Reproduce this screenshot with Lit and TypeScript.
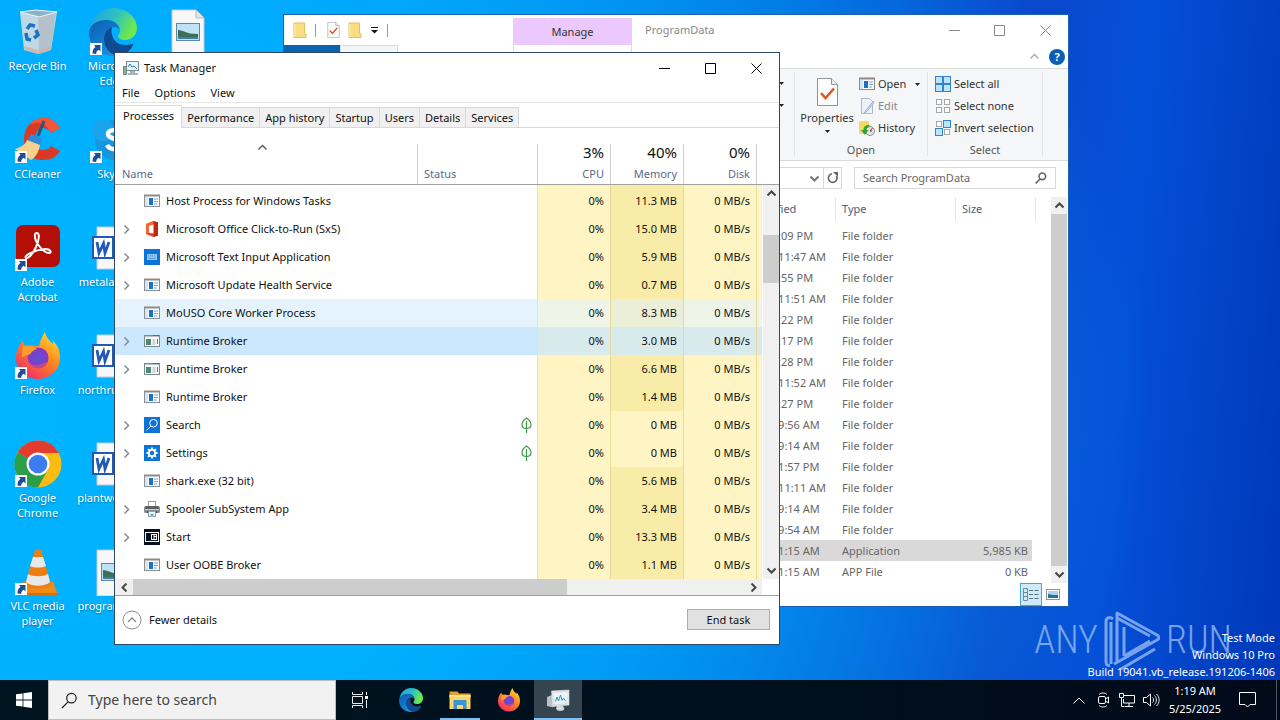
import { LitElement, html, css, svg, nothing } from "lit";
import { customElement } from "lit/decorators.js";
import { classMap } from "lit/directives/class-map.js";

const base = css`
  * { box-sizing: border-box; }
  button, input { font: inherit; color: inherit; margin: 0; padding: 0; border: 0; background: none; border-radius: 0; outline: none; }
  button { display: flex; align-items: center; white-space: nowrap; }
  svg { display: block; flex: none; }
  ul { list-style: none; margin: 0; padding: 0; }
`;

const icon = (w: number, h: number, body: unknown) =>
  html`<svg width=${w} height=${h} viewBox="0 0 ${w} ${h}" fill="none" aria-hidden="true">${body}</svg>`;

/* ---------- small 16px icons ---------- */
const genericApp = () => icon(16, 16, svg`
  <rect x=".5" y="2.5" width="15" height="11" fill="#fff" stroke="#8a8f96"/>
  <path d="M0 2.5h16" stroke="#8f8884" stroke-width="2"/><path d="M1 4v9h3V4z" fill="#d3e9f7"/>
  <rect x="5" y="5" width="4" height="7" fill="#1a72c4"/><path d="M10 6h4M10 8.5h4M10 11h3" stroke="#6fa4cf"/>`);
const brokerApp = () => icon(16, 16, svg`
  <rect x=".5" y="2.5" width="15" height="11" fill="#f7faf9" stroke="#7f8c8c"/>
  <path d="M1 3.5h14" stroke="#b5c4c4"/><path d="M10 2v1M12 2v1M14 2v1" stroke="#445"/>
  <rect x="2" y="6" width="5" height="6" fill="#4d8a7c"/><path d="M8.5 7h3M8.5 9h3M8.5 11h3" stroke="#a7b3b3"/><path d="M13.5 6v5" stroke="#6a7676"/>`);
const officeApp = () => icon(16, 16, svg`
  <path d="M9.500 0 2 3v10l7.500 3 4.500-1.500v-13z" fill="#e8431f"/><path d="M9.500 0v16l4.500-1.500v-13z" fill="#c4260f"/>
  <path d="M2 3v10l3-1.300V4.600l4.500-1.400V0z" fill="#ef6b2c"/><path d="M5 4.700 9.500 3.400v9.200L5 11.800z" fill="#fff"/>`);
const keyboardApp = () => icon(16, 16, svg`
  <rect width="16" height="16" fill="#0a74d8"/><rect x="3" y="5" width="10" height="6" fill="#8fc4f0"/>
  <path d="M4 6.5h8M4 8h8" stroke="#5aa5e6" stroke-dasharray="1 1"/><path d="M5 9.5h6" stroke="#5aa5e6"/>`);
const searchApp = () => icon(16, 16, svg`
  <rect width="16" height="16" fill="#0a74d8"/><circle cx="9.5" cy="6.2" r="3.8" stroke="#fff"/><path d="M7 9 2.500 13.500" stroke="#fff"/>`);
const gearPath = svg`<g stroke="#fff" stroke-width="2"><path d="M8 2.500v11M2.500 8h11M4.100 4.100l7.800 7.800M11.900 4.100l-7.800 7.800"/></g><circle cx="8" cy="8" r="4" fill="#fff"/><circle cx="8" cy="8" r="2.200" fill="#0a74d8"/>`;
const settingsApp = () => icon(16, 16, svg`<rect width="16" height="16" fill="#0a74d8"/>${gearPath}`);
const printerApp = () => icon(16, 16, svg`
  <rect x="4.500" y=".5" width="7" height="5" fill="#fff" stroke="#9a9a9a"/>
  <rect x="0" y="5" width="16" height="7" rx="1.500" fill="#8b8e92"/><path d="M2 5h12l1 3H1z" fill="#5c5f63"/>
  <rect x="1" y="8" width="14" height="1" fill="#c9cccf"/><path d="M3 10h10v2H3z" fill="#3e4144"/>
  <rect x="4.500" y="10.500" width="7" height="5" fill="#f4fbfc" stroke="#8fa3ad"/><path d="M6.500 13h3v1.500h-3z" fill="#2b9ca8"/>`);
const startApp = () => icon(16, 16, svg`
  <rect width="16" height="16" fill="#06101f"/><rect x="1.500" y="3.500" width="13" height="9" stroke="#fff"/>
  <rect x="7.500" y="5.500" width="5" height="5" stroke="#fff"/><path d="M10 5v5M10 7.500h3" stroke="#fff"/>`);
const leaf = () => icon(12, 16, svg`
  <path d="M6.500 1C3.500 3 2 5 2 7.500 2 10 4 11.500 6.500 11.500S11 10 11 7.500C11 5 9.500 3 6.500 1z" stroke="#3f9a4a" stroke-width="1.200"/><path d="M6.500 4v12" stroke="#3f9a4a" stroke-width="1.200"/>`);
const chevron = (dir: "up" | "down" | "left" | "right", color = "#444", width = 2) => {
  const d = { up: "M.5 6.500 4.500 2.500 8.500 6.500", down: "M.5 2.500 4.500 6.500 8.500 2.500", left: "M6.500 .5 2.500 4.500 6.500 8.500", right: "M2.500 .5 6.500 4.500 2.500 8.500" }[dir];
  return icon(9, 9, svg`<path d=${d} stroke=${color} stroke-width=${width}/>`);
};
const triangle = () => icon(5, 3, svg`<path d="M0 0h5L2.500 3z" fill="#222"/>`);
const taskManagerIcon = () => icon(16, 16, svg`
  <path d="M.5 6.500h3v8h-3z" fill="#8fae8f" stroke="#6f8c74"/><rect x="3.500" y="1.500" width="12" height="9" fill="#e6f6fb" stroke="#7f8b93"/>
  <path d="M5 7l2-3 2 3 2-1 3 3" stroke="#2a7fa8"/><path d="M7 11h5v2h3v2H5v-2h2z" fill="#a9b4ba"/>`);
const folder = () => icon(14, 18, svg`
  <path d="M1 2h10.500v10L13 13v3.500H1z" fill="#fbdc82" stroke="#e6bf57"/><path d="M2 3v13" stroke="#fff0bd"/>`);
const checkedSheet = (w: number, h: number) => html`<svg width=${w} height=${h} viewBox="0 0 21 28" fill="none" aria-hidden="true">
  <path d="M.5.5h14l6 6v21H.5z" fill="#fdfdfd" stroke="#8e9499"/><path d="M14.500.5v6h6" stroke="#8e9499" fill="#eee"/>
  <path d="M4 15l4.500 5L17 10.500" stroke="#dc5a28" stroke-width="2.600"/></svg>`;
const editIcon = () => icon(16, 16, svg`
  <path d="M2.500.5h8l3 3v12h-11z" fill="#eef3fa" stroke="#a9b9d2"/><path d="M14.500 3 7 12l-2 3 3-1.500 7-9z" fill="#cfdcf0" stroke="#9fb3d0"/>`);
const historyIcon = () => icon(16, 16, svg`
  <path d="M0 1h10v4h2v9H0z" fill="#f8d866"/><circle cx="11" cy="11" r="4.500" fill="#dfe3e0" stroke="#8b918e"/><path d="M11 11l2.500-3M11 11h2" stroke="#8a3030"/>
  <path d="M10 5c-4 0-5.500 2-5.500 5H2l4 5 3.500-5H7.500c0-2 1-2.500 2.500-3z" fill="#2fa536"/>`);
const tiles = (a: string[]) => icon(16, 16, a.map((f, i) => {
  const x = (i % 2) * 8 + (f === "big" ? 0.5 : 1.5), y = Math.floor(i / 2) * 8 + (f === "big" ? 0.5 : 1.5), s = f === "big" ? 7 : 5;
  return svg`<rect x=${x} y=${y} width=${s} height=${s} fill=${f === "big" ? "#bfe3fb" : "#fff"} stroke=${f === "big" ? "#2f86cf" : "#a6a6a6"}/>`;
}));
const magnifier = (size: number, color: string, sw = 1) => html`<svg width=${size} height=${size} viewBox="0 0 18 18" fill="none" aria-hidden="true">
  <circle cx="11" cy="6.500" r="5" stroke=${color} stroke-width=${sw}/><path d="M7.500 10.500 1 17" stroke=${color} stroke-width=${sw}/></svg>`;

/* ---------- brand artwork, drawn on a 48 unit square ---------- */
const art = (size: number, body: unknown) => html`<svg width=${size} height=${size} viewBox="0 0 48 48" fill="none" aria-hidden="true">${body}</svg>`;
const arrowBadge = svg`<g><rect x="1" y="35" width="12" height="12" fill="#fff"/><path d="M3.500 45.500c0-4 1-5.500 3-6.500L5 37h6.500v6.500L9.800 41.800C8 42.500 7.500 44 7 46z" fill="#1d4f98"/></g>`;
const edgeArt = svg`
  <defs><linearGradient id="eg" x1="0" y1="0" x2="1" y2=".4"><stop stop-color="#1f9fe0"/><stop offset=".55" stop-color="#2cc0c4"/><stop offset="1" stop-color="#6ee84e"/></linearGradient>
  <linearGradient id="eb" x1="0" y1="0" x2=".6" y2="1"><stop stop-color="#0a5cb0"/><stop offset="1" stop-color="#1a8fe0"/></linearGradient></defs>
  <path d="M1 21C3 9 12 0 24 0c14 0 24 10 24 20 0 8-6 12-12 12-5 0-7-2-7-4 0-1 2-2 2-6 0-6-6-10-13-10-9 0-15 5-17 9z" fill="url(#eg)"/>
  <path d="M0 25c0-8 8-13 17-13 8 0 13 5 14 10-1-2-3-3-6-3-6 0-10 5-10 12 0 9 7 15 16 17-2 .3-5 0-7 0C10 48 0 37 0 25z" fill="url(#eb)"/>
  <path d="M15 31c0-6 3-10 8-12-2 7 2 18 13 18 5 0 7-2 8-1 1 1-5 11-14 12-9-1-15-8-15-17z" fill="#104a90"/>`;
const firefoxArt = svg`
  <defs><linearGradient id="ff" x1=".9" y1="0" x2=".2" y2="1"><stop stop-color="#ffe23a"/><stop offset=".45" stop-color="#ff8a1e"/><stop offset="1" stop-color="#f0256c"/></linearGradient>
  <radialGradient id="fp"><stop stop-color="#5b52d8"/><stop offset="1" stop-color="#8a35c4"/></radialGradient></defs>
  <path d="M2 26C2 18 5 13 9 9c0 2 1 4 3 5 3-1 6-1 8 0l5 0c1-6 4-11 6-14 1 5 4 8 8 12 0-2 0-3-1-4 6 5 8 11 8 18 0 12-10 21-22 21S2 38 2 26z" fill="url(#ff)"/>
  <circle cx="24" cy="26" r="10.500" fill="url(#fp)"/><path d="M9 14c6-1 11 0 14 3-3 1-5 2-6 4-2 3-6 1-9 5 0-4 0-8 1-12z" fill="#ff9d2a"/><path d="M14 28c2 4 6 6 11 5 4-1 5-3 8-3-2 5-6 8-11 8s-9-4-8-10z" fill="#ff5a3c" opacity=".5"/>`;
const chromeArt = svg`
  <circle cx="24" cy="24" r="23.500" fill="#f9bd12"/>
  <path d="M24 24 3.700 12.200A23.500 23.500 0 0 0 24 47.500L34 29.500z" fill="#2c9e49"/><path d="M24 24 3.700 12.200A23.500 23.500 0 0 1 44.500 12.500L44.800 13H24z" fill="#e33b2e"/>
  <circle cx="24" cy="24" r="11.500" fill="#fff"/><circle cx="24" cy="24" r="9.300" fill="#3b7df0"/>`;
const recycleArt = svg`
  <path d="M6 4 43 4l-6 38-13 4-14-4z" fill="#d3dde2" fill-opacity=".9"/><path d="M24 8l18-4-5 38-12 4z" fill="#b4bfc6" fill-opacity=".9"/><path d="M6 4l16-2 21 2-18 5z" fill="#8fb0c6" stroke="#edf4f8"/>
  <path d="M10 38l14 4 13-4-1 4-12 4-13-4z" fill="#cdb3a2" fill-opacity=".8"/>
  <g stroke="#1c73c0" stroke-width="3.500"><path d="M13 21l3-4 5 1"/><path d="M22 22l2 5-4 3"/><path d="M17 32l-4-1-1-6"/></g>`;
const ccleanerArt = svg`
  <path d="M46 12C42 5 35 1 28 2 17 3 10 12 10 23c0 13 9 22 20 21 8 0 13-4 16-9l-9-5c-2 3-5 4-8 4-5 0-8-5-8-11s3-11 8-11c4 0 6 2 8 5z" fill="#d93a26"/><path d="M46 12C42 5 35 1 28 2c-6 1-10 3-13 7 8-4 16-3 22 8z" fill="#f0563c"/>
  <path d="M30 5 24 20" stroke="#2f5570" stroke-width="3"/><path d="M17 18l11 4-2 8-13-5z" fill="#2f8bd8"/><path d="M13 24l13 5c-1 6-4 12-9 15L1 33c6-2 10-4 12-9z" fill="#f6d08c"/>`;
const acrobatArt = svg`
  <rect x="2" y="1" width="44" height="42" rx="7" fill="#b30f06"/><path d="M23 9c3 0 2 8-1 14-3 7-8 12-10 11-3-2 8-8 19-9 6 0 7 4 4 4-6 0-15-12-14-18 0-1 1-2 2-2z" stroke="#fff" stroke-width="2"/>`;
const vlcArt = svg`
  <path d="M9 34h30l5 13H3z" fill="#f28a18"/><path d="M3 45h41v2H3z" fill="#d86e0c"/><path d="M24 1c2 0 3 1 3.500 2.500L37 37c-4 5-22 5-26 0l9.500-33.500C21 2 22 1 24 1z" fill="#f07d12"/>
  <path d="M19 9h10l3 9c-4 2-12 2-16 0zM14 26c5 3 15 3 20 0l2 8c-5 5-19 5-24 0z" fill="#e8e8e8"/>`;
const skypeArt = svg`<circle cx="26" cy="24" r="20" fill="#1597e0"/><circle cx="14" cy="14" r="11" fill="#1ba4ec"/><path d="M33 17c-3-4-14-4-14 1 0 6 14 4 14 11 0 5-12 6-15 0" stroke="#fff" stroke-width="4.500"/>`;
const wordArt = svg`
  <path d="M8 3h25l7 7v35H8z" fill="#f7f7f7" stroke="#c9c9c9"/><rect x="4" y="13" width="20" height="21" fill="#fff" stroke="#2259b8" stroke-width="2"/>
  <path d="M8 18l2 11 4.500-9.500L16 29l4-11" stroke="#2259b8" stroke-width="2.800"/>`;
const pictureArt = svg`
  <path d="M8 2h24l8 8v38H8z" fill="#f7f7f7" stroke="#c9c9c9"/><path d="M32 2v8h8" stroke="#bbb" fill="#e4e4e4"/>
  <rect x="12.500" y="15.500" width="23" height="17" fill="#bfe2f7" stroke="#5d87a8"/><path d="M14 22c5 0 8 4 20 4v5H14z" fill="#3c6e58"/><path d="M14 29h20v2H14z" fill="#3f7fae"/>`;
const explorerArt = svg`
  <path d="M3 7h16l3 4h23v8H3z" fill="#e0a02a"/><path d="M3 14h42v28H3z" fill="#fbd565"/><path d="M11 42V26c0-1 1-2 2-2h22c1 0 2 1 2 2v16h-7v-8H18v8z" fill="#3795d6"/><path d="M3 14h42v4H3z" fill="#fde08b"/>`;
const monitorArt = svg`
  <path d="M2 18l12-5v26l-12-3z" fill="#b9c0c4"/><path d="M11 6l35-2v30l-32 3z" fill="#d9dfe2" stroke="#f4f6f7"/><path d="M15 10l28-2v22l-26 2z" fill="#eef5f9"/>
  <path d="M19 27l3-9 3 8 4-12 3 11 3-5 4 6" stroke="#3a8cc4" stroke-width="2"/><path d="M22 36h12l3 6c-3 5-14 5-17 0z" fill="#d3d8da"/>`;

@customElement("desktop-icons")
class DesktopIcons extends LitElement {
  static styles = [base, css`
    :host { display: block; padding-top: 8px; }
    .grid { display: grid; grid-template-rows: repeat(6, 108px); grid-auto-columns: 75px; grid-auto-flow: column; }
    .item { display: flex; justify-content: center; min-width: 0; }
    .shortcut { flex-direction: column; justify-content: flex-start; gap: 2px; color: #fff; font-size: 11px; line-height: 15px; text-align: center; white-space: normal; width: 75px; text-shadow: 0 1px 2px #0006; }
    .label { max-width: 73px; }
  `];
  private items: [unknown, string, boolean][] = [
    [recycleArt, "Recycle Bin", false], [ccleanerArt, "CCleaner", true], [acrobatArt, "Adobe Acrobat", true],
    [firefoxArt, "Firefox", true], [chromeArt, "Google Chrome", true], [vlcArt, "VLC media player", true],
    [edgeArt, "Microsoft Edge", true], [skypeArt, "Skype", true], [wordArt, "metalarea.rtf", false],
    [wordArt, "northrules.rtf", false], [wordArt, "plantwood.rtf", false], [pictureArt, "programs.jpg", false],
    [pictureArt, "", false],
  ];
  render() {
    return html`<ul class="grid">${this.items.map(([a, label, linked]) => html`
      <li class="item"><button class="shortcut" aria-label=${label || "Picture"}>${art(48, svg`${a}${linked ? arrowBadge : nothing}`)}<span class="label">${label}</span></button></li>`)}</ul>`;
  }
}

@customElement("explorer-window")
class ExplorerWindow extends LitElement {
  static styles = [base, css`
    :host { display: block; background: #fff; color: #333; font-size: 11px; line-height: 16px; outline: 1px solid #1b5fae; }
    .title { display: flex; height: 30px; align-items: center; }
    .quick { display: flex; align-items: center; gap: 8px; width: 229px; padding-left: 9px; }
    .bar { width: 1px; height: 13px; background: #999; }
    .bar:nth-child(2) { margin-right: 3px; }
    .manage { align-self: flex-end; height: 27px; width: 119px; display: flex; align-items: center; justify-content: center; background: #ebc9fc; }
    .name { flex: 1; padding-left: 13px; color: #888; }
    .caption { width: 45px; height: 30px; justify-content: center; }
    .caption:last-child { width: 46px; }
    .tabs { display: flex; height: 24px; border-bottom: 1px solid #dadbdc; align-items: center; }
    .file { width: 56px; height: 23px; background: #0a63b1; }
    .home { width: 58px; height: 23px; background: #f5f6f7; border: 1px solid #dadbdc; border-bottom: 0; }
    .context { width: 119px; height: 23px; border: 1px solid #dadbdc; border-width: 0 1px; margin-left: 115px; }
    .push { flex: 1; }
    .help { width: 16px; height: 16px; border-radius: 50%; background: #0a5fb4; color: #fff; font-weight: 700; justify-content: center; margin: 0 3px 0 10px; }
    .ribbon { display: flex; height: 92px; background: #f5f6f7; border-bottom: 1px solid #dadbdc; padding: 3px 0 4px; }
    .group { display: flex; flex-direction: column; justify-content: space-between; border-right: 1px solid #e2e3e4; }
    .clipboard { width: 511px; align-items: flex-end; justify-content: flex-start; gap: 19px; padding: 10px 10px 0; }
    .open { width: 133px; }
    .select { width: 115px; }
    .tools { display: flex; padding-left: 5px; gap: 5px; }
    .select .tools { padding-left: 7px; }
    .list { display: flex; flex-direction: column; gap: 6px; padding-top: 4px; }
    .list button { gap: 3px; }
    .properties { flex-direction: column; gap: 4px; padding-top: 6px; width: 54px; }
    .muted { color: #888; }
    .caption-label { text-align: center; color: #555; line-height: 12px; }
    .nav { display: flex; padding: 6px 12px 0 0; gap: 12px; }
    .address { display: flex; flex: 1; height: 22px; border: 1px solid #d9d9d9; justify-content: flex-end; }
    .address button { width: 18px; justify-content: center; }
    .address .refresh { border-left: 1px solid #d9d9d9; }
    .search { display: flex; align-items: center; width: 202px; height: 22px; border: 1px solid #d9d9d9; padding: 0 8px; }
    .search input { flex: 1; min-width: 0; }
    .search input::placeholder { color: #666; opacity: 1; }
    .content { display: flex; height: 386px; margin-top: 8px; }
    .files { flex: 1; padding-left: 200px; }
    table { border-collapse: separate; border-spacing: 0; table-layout: fixed; width: 552px; }
    th { height: 24px; font-weight: 400; text-align: left; color: #4c607a; border-right: 1px solid #e5e5e5; padding: 0 6px; }
    td { height: 21px; padding: 0 6px; color: #666; white-space: nowrap; overflow: hidden; }
    thead::after { content: ""; display: block; height: 4px; }
    .c-name { width: 233px; } .c-date { width: 119px; } .c-type { width: 120px; } .c-size { width: 76px; } .c-gap { width: 4px; }
    .right { text-align: right; padding: 0 4px; }
    .gap { padding: 0; }
    .picked td:not(.gap) { background: #d9d9d9; }
    .scroll { width: 16px; margin-right: 1px; background: #cdcdcd; display: flex; flex-direction: column; justify-content: space-between; }
    .scroll button { height: 17px; background: #f0f0f0; justify-content: center; }
    .status { display: flex; height: 23px; justify-content: flex-end; padding-right: 4px; }
    .status button { width: 22px; height: 23px; justify-content: center; }
    .status .on { background: #cdeaf9; border: 1px solid #4aa3d0; }
  `];
  private rows = [
    ["5/9/2021 1:09 PM"], ["1/11/2024 11:47 AM"], ["5/4/2021 3:55 PM"], ["1/11/2024 11:51 AM"],
    ["8/5/2022 2:22 PM"], ["5/3/2021 1:17 PM"], ["9/5/2023 2:28 PM"], ["1/11/2024 11:52 AM"],
    ["5/4/2021 3:27 PM"], ["11/7/2019 9:56 AM"], ["12/7/2019 9:14 AM"], ["12/9/2021 1:57 PM"],
    ["4/11/2025 11:11 AM"], ["12/7/2019 9:14 AM"], ["12/7/2019 9:54 AM"],
    ["5/25/2025 1:15 AM", "Application", "5,985 KB"], ["5/25/2025 1:15 AM", "APP File", "0 KB"],
  ];
  render() {
    return html`
      <div class="title">
        <div class="quick">${folder()}<span class="bar"></span>${checkedSheet(13, 16)}${folder()}${icon(9, 8, svg`<path d="M1 1.500h7" stroke="#111"/><path d="M1 4h7L4.500 7.500z" fill="#111"/>`)}<span class="bar"></span></div>
        <div class="manage">Manage</div>
        <div class="name">ProgramData</div>
        <button class="caption" aria-label="Minimize">${icon(11, 11, svg`<path d="M0 5.500h11" stroke="#888"/>`)}</button>
        <button class="caption" aria-label="Maximize">${icon(11, 11, svg`<path d="M.5.5h10v10H.5z" stroke="#888"/>`)}</button>
        <button class="caption" aria-label="Close">${icon(11, 11, svg`<path d="M.5.5l10 10M10.500.5l-10 10" stroke="#888"/>`)}</button>
      </div>
      <div class="tabs"><div class="file"></div><div class="home"></div><div class="context"></div><div class="push"></div>
        ${chevron("up", "#aaa", 1.5)}<button class="help">?</button></div>
      <div class="ribbon">
        <div class="group clipboard">${triangle()}${triangle()}</div>
        <div class="group open">
          <div class="tools">
            <button class="properties">${checkedSheet(21, 28)}<span>Properties</span>${triangle()}</button>
            <div class="list">
              <button>${genericApp()}<span>Open</span>&nbsp;${triangle()}</button>
              <button class="muted">${editIcon()}<span>Edit</span></button>
              <button>${historyIcon()}<span>History</span></button>
            </div>
          </div>
          <div class="caption-label">Open</div>
        </div>
        <div class="group select">
          <div class="tools"><div class="list">
            <button>${tiles(["big", "big", "big", "big"])}<span>Select all</span></button>
            <button>${tiles(["", "", "", ""])}<span>Select none</span></button>
            <button>${tiles(["", "big", "big", ""])}<span>Invert selection</span></button>
          </div></div>
          <div class="caption-label">Select</div>
        </div>
      </div>
      <div class="nav">
        <div class="address"><button aria-label="History">${chevron("down", "#777")}</button>
          <button class="refresh" aria-label="Refresh">${icon(12, 12, svg`<path d="M9.500 4A4.300 4.300 0 1 1 5 1.800" stroke="#666" stroke-width="1.600"/><path d="M6 0h5v5z" fill="#666"/>`)}</button></div>
        <label class="search"><input type="text" placeholder="Search ProgramData" aria-label="Search ProgramData">${magnifier(12, "#666", 2.4)}</label>
      </div>
      <div class="content">
        <div class="files"><table>
          <colgroup><col class="c-name"><col class="c-date"><col class="c-type"><col class="c-size"><col class="c-gap"></colgroup>
          <thead><tr><th aria-label="Name"></th><th>Date modified</th><th>Type</th><th colspan="2">Size</th></tr></thead>
          <tbody>${this.rows.map(([d, t, s]) => html`
            <tr class=${classMap({ picked: t === "Application" })}><td></td><td>${d}</td><td>${t ?? "File folder"}</td><td class="right">${s ?? ""}</td><td class="gap"></td></tr>`)}</tbody>
        </table></div>
        <div class="scroll"><button aria-label="Up">${chevron("up")}</button><button aria-label="Down">${chevron("down")}</button></div>
      </div>
      <div class="status">
        <button class="on" aria-label="Details">${icon(16, 13, svg`<path d="M.5.5h4v12h-4zM.5 4.500h4M.5 8.500h4" stroke="#6f8ba0"/><path d="M6 2.500h4M11.500 2.500h4M6 6.500h4M11.500 6.500h4M6 10.500h4M11.500 10.500h4" stroke="#5f6f7c"/>`)}</button>
        <button aria-label="Thumbnails">${icon(14, 11, svg`<rect x=".5" y=".5" width="13" height="10" fill="#fff" stroke="#8a97a3"/><rect x="2" y="2" width="10" height="7" fill="#a9d5f0"/><path d="M2 5l5 1 5 0v3H2z" fill="#2d6f8f"/>`)}</button>
      </div>`;
  }
}

type Proc = { name: string; icon: () => unknown; group?: boolean; mem: string; leaf?: boolean; state?: string };

@customElement("task-manager")
class TaskManager extends LitElement {
  static styles = [base, css`
    :host { display: block; background: #fff; color: #111; font-size: 11px; line-height: 16px; border: 1px solid #2c4a66; }
    .title { display: flex; height: 30px; align-items: center; padding-left: 8px; gap: 5px; }
    .name { flex: 1; }
    .caption { width: 46px; height: 30px; justify-content: center; }
    .controls { display: flex; }
    .menu { display: flex; height: 20px; padding-left: 7px; gap: 15px; border-bottom: 1px solid #e6e6e6; }
    .tabs { display: flex; align-items: flex-end; height: 25px; }
    .tabs::after { content: ""; flex: 1; border-bottom: 1px solid #d9d9d9; }
    .tab { height: 21px; padding: 0 5px; background: #f0f0f0; border: 1px solid #d9d9d9; border-left: 0; }
    .tab.active { height: 23px; padding: 0 7px 1px 8px; background: #fff; border-bottom-color: #fff; }
    .view { display: flex; }
    table { flex: 1; min-width: 0; border-collapse: separate; border-spacing: 0; table-layout: fixed; margin-right: 1px; }
    .c-status { width: 120px; } .c-num { width: 73px; } .c-end { width: 5px; }
    th { position: relative; height: 57px; padding: 12px 6px 2px; border-bottom: 1px solid #a0a0a0; font-weight: 400; color: #5b6b88; vertical-align: bottom; text-align: left; }
    th::after { content: ""; position: absolute; right: 0; top: 16px; bottom: 0; width: 1px; background: #d0d0d0; }
    th:last-child::after { content: none; }
    .num { text-align: right; }
    .load { display: block; margin-bottom: 3px; font-size: 15px; line-height: 22px; color: #111; }
    .sort { position: absolute; left: 0; right: 8px; top: 15px; display: flex; justify-content: center; }
    td { height: 28px; padding: 0 6px; white-space: nowrap; }
    th:first-child, td:first-child { padding-left: 7px; }
    tbody tr:first-child td { height: 30px; padding-top: 2px; }
    .proc { display: flex; align-items: center; height: 28px; gap: 6px; }
    .twist { width: 10px; margin-right: 6px; }
    .leaf { display: flex; justify-content: flex-end; }
    td.num, td.end { background: #fff4c4; }
    td.num { border-right: 1px solid #e6d99a; }
    th.num { padding-right: 7px; }
    .view .end { padding: 0; }
    td.num.warm { background: #f9eca8; }
    .view .status-cell { border-right: 1px solid #efe3ab; padding-right: 5px; }
    .hover td { background: #e5f3ff; } .hover td.num, .hover td.end { background: #eff4e8; } .hover td.num.warm { background: #ebefd8; }
    .selected td { background: #cce8ff; } .selected td.num, .selected td.end, .selected td.num.warm { background: #d9eaec; }
    .side { display: flex; flex-direction: column; width: 16px; }
    .cap { height: 57px; border-bottom: 1px solid #a0a0a0; margin-left: -1px; }
    .vscroll { flex: 1; display: grid; grid-template-rows: 17px 33px 48px 1fr 17px; background: #f0f0f0; }
    .vscroll button, .hscroll button { justify-content: center; background: #f0f0f0; }
    .thumb { background: #cdcdcd; }
    .vscroll .thumb { grid-row: 3; }
    .vscroll .down { grid-row: 5; }
    .hscroll { display: grid; grid-template-columns: 18px 71fr 29fr 18px; height: 16px; margin-right: 17px; background: #f0f0f0; }
    .hscroll .right { grid-column: 4; }
    .footer { display: flex; justify-content: space-between; align-items: center; height: 49px; border-top: 1px solid #a0a0a0; padding: 0 9px 1px 7px; }
    .fewer { gap: 7px; }
    .end-task { width: 83px; height: 21px; justify-content: center; background: #e1e1e1; border: 1px solid #adadad; }
  `];
  private procs: Proc[] = [
    { name: "Host Process for Windows Tasks", icon: genericApp, mem: "11.3 MB" },
    { name: "Microsoft Office Click-to-Run (SxS)", icon: officeApp, group: true, mem: "15.0 MB" },
    { name: "Microsoft Text Input Application", icon: keyboardApp, group: true, mem: "5.9 MB" },
    { name: "Microsoft Update Health Service", icon: genericApp, group: true, mem: "0.7 MB" },
    { name: "MoUSO Core Worker Process", icon: genericApp, mem: "8.3 MB", state: "hover" },
    { name: "Runtime Broker", icon: brokerApp, group: true, mem: "3.0 MB", state: "selected" },
    { name: "Runtime Broker", icon: brokerApp, group: true, mem: "6.6 MB" },
    { name: "Runtime Broker", icon: genericApp, mem: "1.4 MB" },
    { name: "Search", icon: searchApp, group: true, mem: "0 MB", leaf: true },
    { name: "Settings", icon: settingsApp, group: true, mem: "0 MB", leaf: true },
    { name: "shark.exe (32 bit)", icon: genericApp, mem: "5.6 MB" },
    { name: "Spooler SubSystem App", icon: printerApp, group: true, mem: "3.4 MB" },
    { name: "Start", icon: startApp, group: true, mem: "13.3 MB" },
    { name: "User OOBE Broker", icon: genericApp, mem: "1.1 MB" },
  ];
  render() {
    const tabs = ["Processes", "Performance", "App history", "Startup", "Users", "Details", "Services"];
    return html`
      <div class="title">${taskManagerIcon()}<span class="name">Task Manager</span>
        <div class="controls">
          <button class="caption" aria-label="Minimize">${icon(11, 11, svg`<path d="M0 5.500h11" stroke="#000"/>`)}</button>
          <button class="caption" aria-label="Maximize">${icon(11, 11, svg`<path d="M.5.5h10v10H.5z" stroke="#000"/>`)}</button>
          <button class="caption" aria-label="Close">${icon(11, 11, svg`<path d="M.5.5l10 10M10.500.5l-10 10" stroke="#000"/>`)}</button>
        </div></div>
      <div class="menu"><button>File</button><button>Options</button><button>View</button></div>
      <div class="tabs" role="tablist">${tabs.map((t, i) => html`<button role="tab" class=${classMap({ tab: true, active: i === 0 })}>${t}</button>`)}</div>
      <div class="view">
        <table>
          <colgroup><col><col class="c-status"><col class="c-num"><col class="c-num"><col class="c-num"><col class="c-end"></colgroup>
          <thead><tr>
            <th><span class="sort">${chevron("up", "#555", 1.3)}</span>Name</th><th>Status</th>
            <th class="num"><span class="load">3%</span>CPU</th><th class="num"><span class="load">40%</span>Memory</th>
            <th class="num"><span class="load">0%</span>Disk</th><th class="end"></th></tr></thead>
          <tbody>${this.procs.map((p) => html`
            <tr class=${p.state ?? ""}>
              <td><div class="proc"><span class="twist">${p.group ? chevron("right", "#8a8a8a", 1.5) : nothing}</span>${p.icon()}<span>${p.name}</span></div></td>
              <td class="status-cell">${p.leaf ? html`<div class="leaf">${leaf()}</div>` : nothing}</td>
              <td class="num">0%</td><td class=${classMap({ num: true, warm: p.mem !== "0 MB" })}>${p.mem}</td><td class="num">0 MB/s</td><td class="end"></td>
            </tr>`)}</tbody>
        </table>
        <div class="side"><div class="cap"></div>
          <div class="vscroll"><button aria-label="Up">${chevron("up")}</button><div class="thumb"></div><button class="down" aria-label="Down">${chevron("down")}</button></div></div>
      </div>
      <div class="hscroll"><button aria-label="Left">${chevron("left")}</button><div class="thumb"></div><button class="right" aria-label="Right">${chevron("right")}</button></div>
      <div class="footer">
        <button class="fewer">${icon(20, 20, svg`<circle cx="10" cy="10" r="9" stroke="#8a8a8a"/><path d="M6 12l4-4 4 4" stroke="#8a8a8a" stroke-width="1.300"/>`)}Fewer details</button>
        <button class="end-task">End task</button>
      </div>`;
  }
}

@customElement("task-bar")
class TaskBar extends LitElement {
  static styles = [base, css`
    :host { display: flex; height: 40px; background: linear-gradient(90deg, #00141f, #00101d 60%, #020a1a); color: #fff; font-size: 11px; line-height: 18px; }
    .start { width: 48px; justify-content: center; }
    .search { display: flex; align-items: center; width: 288px; gap: 10px; padding-left: 12px; background: #f2f2f2; border: 1px solid #bdbdbd; color: #444; font-size: 14px; }
    .search input { flex: 1; min-width: 0; }
    .search input::placeholder { color: #444; opacity: 1; }
    .apps { display: flex; flex: 1; gap: 1px; }
    .app { width: 48px; justify-content: center; }
    .view { margin-right: 2px; }
    .running { background: linear-gradient(#7cc0f5, #7cc0f5) center bottom / 40px 2px no-repeat; }
    .active { background: linear-gradient(#7cc0f5, #7cc0f5) center bottom / 48px 2px no-repeat #34454f; }
    .tray { display: flex; align-items: center; }
    .tray button { width: 24px; height: 40px; justify-content: center; }
    .tray .clock { width: 64px; flex-direction: column; }
    .tray .notes { width: 41px; }
    .peek { width: 4px; margin-left: 8px; height: 40px; border-left: 1px solid #4d5a66; }
  `];
  render() {
    return html`
      <button class="start" aria-label="Start">${icon(16, 16, svg`<path d="M0 2.300 6.600 1.400v6.200H0zM7.400 1.300 16 0v7.600H7.400zM0 8.400h6.600v6.200L0 13.700zM7.400 8.400H16V16l-8.600-1.300z" fill="#fff"/>`)}</button>
      <label class="search">${magnifier(17, "#222", 1.3)}<input type="text" placeholder="Type here to search" aria-label="Search"></label>
      <div class="apps">
        <button class="app view" aria-label="Task View">${icon(17, 16, svg`<path d="M.5 0v2.500h10V0M.5 4.500h10v7H.5zM.5 16v-2.500h10V16M14.500 0v3M14.500 8v8" stroke="#e6eaec"/><path d="M13 4h3v3h-3z" fill="#fff"/>`)}</button>
        <button class="app" aria-label="Edge">${art(24, edgeArt)}</button>
        <button class="app running" aria-label="File Explorer">${art(24, explorerArt)}</button>
        <button class="app" aria-label="Firefox">${art(24, firefoxArt)}</button>
        <button class="app active" aria-label="Task Manager">${art(24, monitorArt)}</button>
      </div>
      <div class="tray">
        <button aria-label="More">${icon(12, 7, svg`<path d="M.5 6.500 6 1l5.500 5.500" stroke="#fff"/>`)}</button>
        <button aria-label="Meet now">${icon(12, 16, svg`<rect x="1.500" y="4.500" width="7" height="7" rx="1.500" stroke="#fff"/><path d="M8.500 7l3-2v6l-3-2" stroke="#fff"/><path d="M2 2.500c2-2 6-2 8 0M2 13.500c2 2 6 2 8 0" stroke="#ddd"/>`)}</button>
        <button aria-label="Network">${icon(16, 14, svg`<path d="M5 2.500h10.500v7.500H4.500V6M10 10v3M6 13.500h8M.5.5h4v4h-4zM2.500 4.500v9h3" stroke="#fff"/>`)}</button>
        <button aria-label="Volume">${icon(17, 14, svg`<path d="M.5 4.500h3l4-3.500v12l-4-3.500h-3z" stroke="#fff"/><path d="M9.500 4.500c1.500 1.500 1.500 3.500 0 5M11.500 2.500c2.500 2.500 2.500 6.500 0 9M13.500 1c3.500 3.500 3.500 8.500 0 12" stroke="#e6e6e6"/>`)}</button>
        <button class="clock"><span>1:19 AM</span><span>5/25/2025</span></button>
        <button class="notes" aria-label="Notifications">${icon(17, 16, svg`<path d="M.5.500h16v12h-5.500l-2.500 2.500-2.500-2.500H.5z" stroke="#fff"/>`)}</button>
        <div class="peek"></div>
      </div>`;
  }
}

@customElement("app-root")
class AppRoot extends LitElement {
  static styles = [base, css`
    :host { display: flex; flex-direction: column; height: 100vh; overflow: hidden; font-family: "Noto Sans", "Open Sans", sans-serif; font-size: 11px; }
    .desktop { position: relative; flex: 1; min-height: 0;
      background: radial-gradient(ellipse 90% 130% at 0% 60%, #00b4ff 0%, #00b0ff 40%, #0098f400 100%),
        linear-gradient(95deg, #0098f8 0%, #0090f0 30%, #0070e0 52%, #0a48cc 78%, #0450d8 86%, #0038b8 100%); }
    .explorer { position: absolute; left: 284px; top: 15px; width: 784px; }
    .manager { position: absolute; left: 114px; top: 52px; width: 666px; }
    .brand { position: absolute; right: 48px; bottom: 10px; display: flex; align-items: center; gap: 6px; color: #a9c8f5; opacity: .7; font: 400 38px/60px "Liberation Sans Narrow", "Roboto Condensed", "Open Sans Condensed", Roboto, sans-serif; font-weight: 300; }
    .build { position: absolute; right: 5px; bottom: 0; color: #fff; text-align: right; line-height: 17px; }
    task-bar { flex: none; }
  `];
  render() {
    return html`
      <main class="desktop">
        <desktop-icons></desktop-icons>
        <explorer-window class="explorer"></explorer-window>
        <task-manager class="manager"></task-manager>
        <div class="brand"><span>ANY</span>${icon(56, 60, svg`<g stroke="#a9c8f5" stroke-width="3" stroke-linejoin="round"><path d="M9 9c-4-3-7-1-7 3v40c0 3 2 4 4 3"/><path d="M7 54V12"/><path d="M20 46V17M13 52V3l40 22c3 2 2 4 0 5L10 54"/><path d="M13 8l33 18M46 31 20 46"/><path d="M17 59l34-20"/></g>`)}<span>RUN</span></div>
        <div class="build"><div>Test Mode</div><div>Windows 10 Pro</div><div>Build 19041.vb_release.191206-1406</div></div>
      </main>
      <task-bar></task-bar>`;
  }
}
